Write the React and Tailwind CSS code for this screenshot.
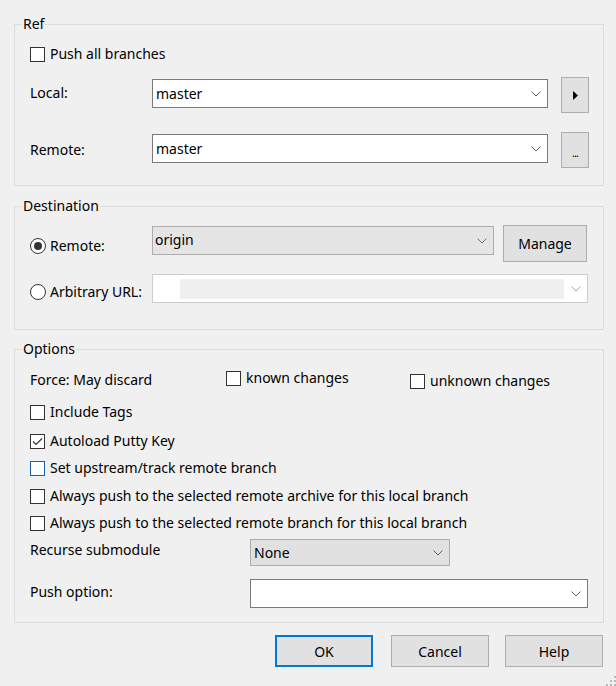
import React from "react";

const Chevron = ({ color = "#606060" }) => (
  <svg width="10" height="6" viewBox="0 0 10 6" fill="none">
    <path d="M0.5 0.5 L5 5 L9.5 0.5" stroke={color} strokeWidth="1" />
  </svg>
);

const CheckBox = ({ checked, blue }) => (
  <span
    className={`w-[15px] h-[15px] shrink-0 bg-white border flex items-center justify-center ${
      blue ? "border-[#1a5fa8]" : "border-[#333333]"
    }`}
  >
    {checked && (
      <svg width="13" height="13" viewBox="0 0 13 13" fill="none">
        <path d="M2 6.5 L5 9.5 L11 3.5" stroke="#333333" strokeWidth="1.2" />
      </svg>
    )}
  </span>
);

const Radio = ({ checked }) => (
  <span className="w-[16px] h-[16px] shrink-0 rounded-full bg-white border border-[#333333] flex items-center justify-center">
    {checked && <span className="w-[8px] h-[8px] rounded-full bg-[#333333]" />}
  </span>
);

const Check = ({ label, checked, blue, className = "" }) => (
  <div className={`flex items-center h-[20px] gap-[5px] ${className}`}>
    <CheckBox checked={checked} blue={blue} />
    <span className="leading-[20px] whitespace-nowrap">{label}</span>
  </div>
);

const Combo = ({ value, className = "" }) => (
  <div className={`bg-white border border-[#7a7a7a] flex items-center pl-[3px] pr-[6px] ${className}`}>
    <span className="flex-1 leading-[20px]">{value}</span>
    <Chevron />
  </div>
);

const Button = ({ children, className = "" }) => (
  <div className={`bg-[#e1e1e1] border border-[#adadad] flex items-center justify-center ${className}`}>
    {children}
  </div>
);

const Group = ({ title, className = "", children }) => (
  <fieldset className={`border border-[#dcdcdc] ${className}`}>
    <legend className="ml-[7px] px-[1px] leading-[18px]">{title}</legend>
    {children}
  </fieldset>
);

export default function App() {
  return (
    <div className="relative w-[616px] h-[686px] bg-[#f0f0f0] pt-[15px] pl-[14px] pr-[12px] text-[14px] text-black font-['Noto_Sans',sans-serif] select-none">
      <Group title="Ref">
        <div className="pl-[15px] pr-[14px] pb-[17px]">
          <Check label="Push all branches" className="mt-[11px]" />
          <div className="flex mt-[13px] h-[36px]">
            <span className="w-[122px] pt-[6px] leading-[20px]">Local:</span>
            <Combo value="master" className="mt-[2px] w-[396px] h-[29px]" />
            <Button className="ml-[13px] w-[28px] h-[36px]">
              <svg width="5" height="9" viewBox="0 0 5 9">
                <polygon points="0,0 5,4.5 0,9" fill="#000" />
              </svg>
            </Button>
          </div>
          <div className="flex mt-[19px] h-[36px]">
            <span className="w-[122px] pt-[8px] leading-[20px]">Remote:</span>
            <Combo value="master" className="mt-[2px] w-[396px] h-[29px]" />
            <Button className="ml-[13px] w-[28px] h-[36px] items-end pb-[9px]">
              <span className="text-[11px] leading-none tracking-[-1px]">...</span>
            </Button>
          </div>
        </div>
      </Group>

      <Group title="Destination" className="mt-[11px]">
        <div className="pl-[15px] pr-[14px] pb-[26px]">
          <div className="flex mt-[10px] h-[37px]">
            <div className="w-[122px] mt-[11px] h-[20px] flex items-center gap-[4px]">
              <Radio checked />
              <span className="leading-[20px]">Remote:</span>
            </div>
            <div className="mt-[1px] w-[342px] h-[29px] bg-[#e5e5e5] border border-[#adadad] flex items-center pl-[2px] pr-[6px]">
              <span className="flex-1 leading-[20px] -mt-[2px]">origin</span>
              <Chevron color="#707070" />
            </div>
            <Button className="ml-[9px] w-[84px] h-[37px]">
              <span className="leading-[20px]">Manage</span>
            </Button>
          </div>
          <div className="flex mt-[12px] h-[29px]">
            <div className="w-[122px] mt-[8px] h-[20px] flex items-center gap-[4px]">
              <Radio />
              <span className="leading-[20px] whitespace-nowrap">Arbitrary URL:</span>
            </div>
            <div className="w-[436px] h-[29px] bg-white border border-[#cccccc] flex items-center pl-[27px]">
              <div className="flex-1 h-[20px] bg-[#f0f0f0]" />
              <div className="w-[23px] flex justify-center">
                <Chevron color="#a8a8a8" />
              </div>
            </div>
          </div>
        </div>
      </Group>

      <Group title="Options" className="mt-[10px]">
        <div className="pl-[15px] pr-[14px] pb-[14px]">
          <div className="flex items-start mt-[10px] h-[24px]">
            <span className="w-[196px] mt-[2px] leading-[20px]">Force: May discard</span>
            <Check label="known changes" className="w-[184px]" />
            <Check label="unknown changes" className="mt-[3px]" />
          </div>
          <Check label="Include Tags" className="mt-[10px]" />
          <Check label="Autoload Putty Key" checked className="mt-[9px]" />
          <Check label="Set upstream/track remote branch" blue className="mt-[7px]" />
          <Check label="Always push to the selected remote archive for this local branch" className="mt-[8px]" />
          <Check label="Always push to the selected remote branch for this local branch" className="mt-[7px]" />
          <div className="flex mt-[6px] h-[27px]">
            <span className="w-[220px] mt-[1px] leading-[20px]">Recurse submodule</span>
            <div className="w-[200px] h-[27px] bg-[#e1e1e1] border border-[#adadad] flex items-center pl-[3px] pr-[6px]">
              <span className="flex-1 leading-[20px]">None</span>
              <Chevron />
            </div>
          </div>
          <div className="flex mt-[13px] h-[29px]">
            <span className="w-[220px] mt-[3px] leading-[20px]">Push option:</span>
            <Combo value="" className="w-[338px] h-[29px]" />
          </div>
        </div>
      </Group>

      <div className="flex justify-end mt-[12px] pr-[1px]">
        <div className="w-[98px] h-[32px] bg-[#e1e1e1] border-2 border-[#0078d7] flex items-center justify-center">
          OK
        </div>
        <Button className="ml-[18px] w-[98px] h-[32px]">Cancel</Button>
        <Button className="ml-[16px] w-[98px] h-[32px]">Help</Button>
      </div>

      <svg className="absolute right-0 bottom-0" width="10" height="10" viewBox="0 0 10 10">
        <rect x="8" y="0" width="2" height="2" fill="#b8b8b8" />
        <rect x="4" y="4" width="2" height="2" fill="#b8b8b8" />
        <rect x="8" y="4" width="2" height="2" fill="#b8b8b8" />
        <rect x="0" y="8" width="2" height="2" fill="#b8b8b8" />
        <rect x="4" y="8" width="2" height="2" fill="#b8b8b8" />
        <rect x="8" y="8" width="2" height="2" fill="#b8b8b8" />
      </svg>
    </div>
  );
}
